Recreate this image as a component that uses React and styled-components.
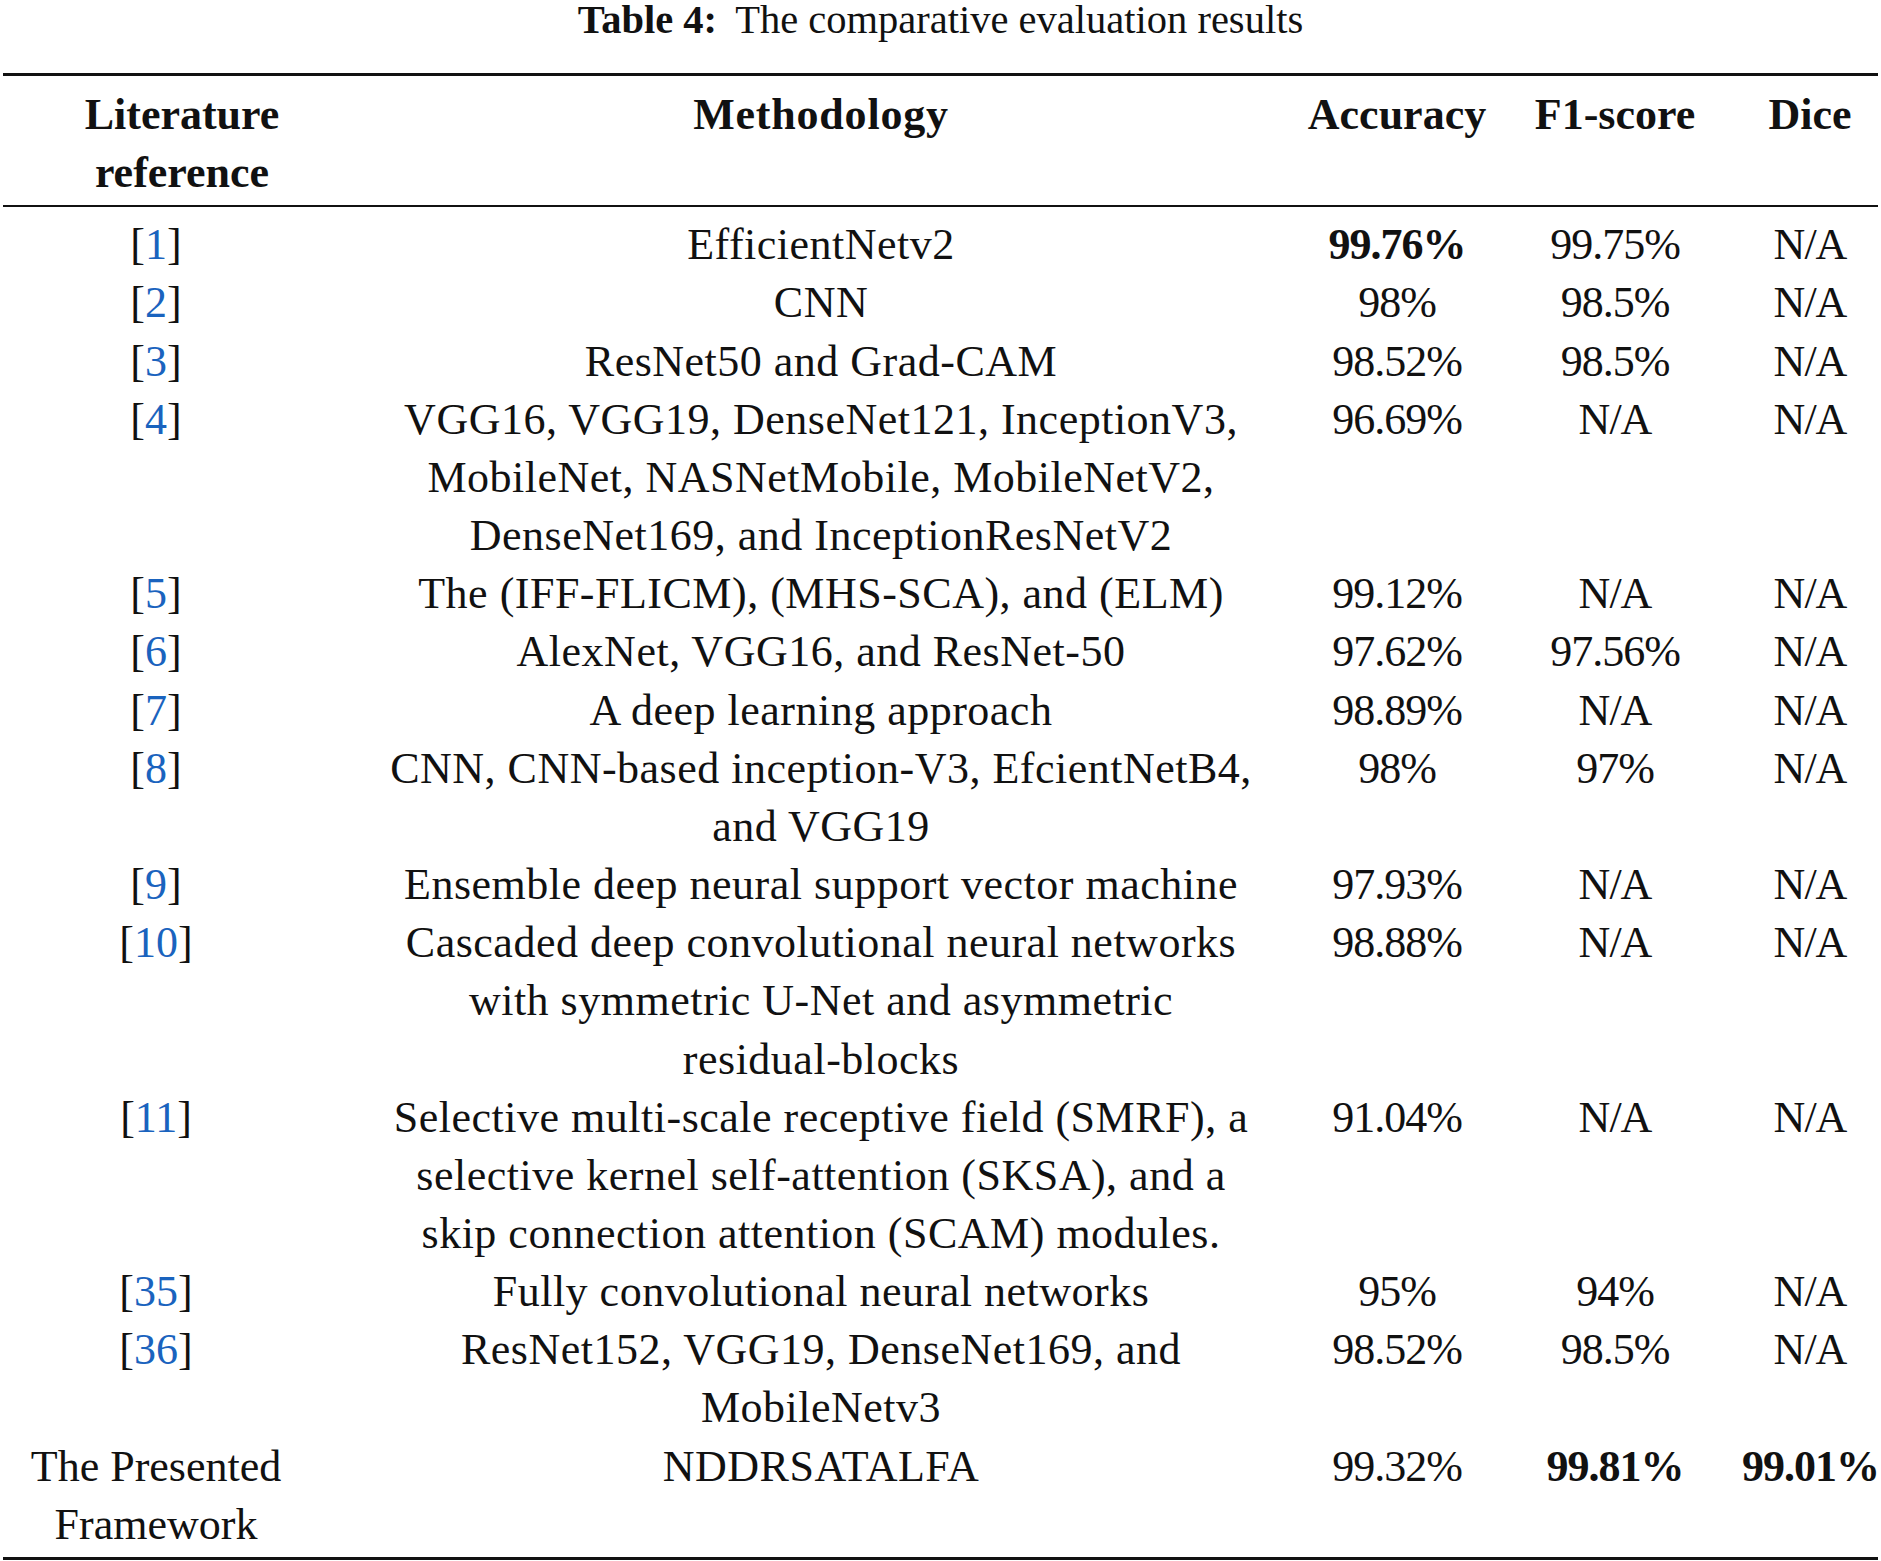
import React from 'react';
import styled, { createGlobalStyle } from 'styled-components';

const GlobalStyle = createGlobalStyle`
  html, body {
    margin: 0;
    padding: 0;
    background: #ffffff;
  }
  body {
    font-family: "Liberation Serif", "Times New Roman", serif;
    color: #111111;
  }
`;

const Page = styled.div`
  width: 1881px;
  padding: 0 3px 0 3px;
  box-sizing: border-box;
`;

const Caption = styled.div`
  font-size: 40.5px;
  line-height: 40px;
  text-align: center;
  margin-bottom: 33px;

  b {
    font-weight: 700;
    margin-right: 0.45em;
  }
`;

const Table = styled.table`
  width: 1875px;
  table-layout: fixed;
  border-collapse: collapse;
  border-top: 3px solid #111;
  border-bottom: 3px solid #111;
  font-size: 44px;
  line-height: 58.15px;
`;

const HeadRow = styled.tr`
  border-bottom: 2px solid #111;
`;

const HeadCell = styled.th`
  font-weight: 700;
  text-align: center;
  vertical-align: top;
  white-space: nowrap;
  padding: 10px 0 3px ${props => props.$shift || 0}px;
  letter-spacing: ${props => props.$spread || 0}px;
`;

const Cell = styled.td`
  text-align: center;
  vertical-align: top;
  white-space: nowrap;
  padding: ${props => (props.$first ? '9px' : '0')} ${props => props.$pullLeft || 0}px
    ${props => (props.$last ? '3px' : '0')} 0;
  font-weight: ${props => (props.$bold ? 700 : 400)};
  letter-spacing: ${props => props.$spacing || 0}px;
`;

const RefLink = styled.a`
  color: #1a63be;
  text-decoration: none;
`;

const Bracket = styled.span`
  color: #111;
`;

const rows = [
  { ref: '1', method: ['EfficientNetv2'], acc: '99.76%', accBold: true, f1: '99.75%', dice: 'N/A' },
  { ref: '2', method: ['CNN'], acc: '98%', f1: '98.5%', dice: 'N/A' },
  { ref: '3', method: ['ResNet50 and Grad-CAM'], acc: '98.52%', f1: '98.5%', dice: 'N/A' },
  {
    ref: '4',
    method: [
      'VGG16, VGG19, DenseNet121, InceptionV3,',
      'MobileNet, NASNetMobile, MobileNetV2,',
      'DenseNet169, and InceptionResNetV2',
    ],
    acc: '96.69%',
    f1: 'N/A',
    dice: 'N/A',
  },
  { ref: '5', method: ['The (IFF-FLICM), (MHS-SCA), and (ELM)'], acc: '99.12%', f1: 'N/A', dice: 'N/A' },
  { ref: '6', method: ['AlexNet, VGG16, and ResNet-50'], acc: '97.62%', f1: '97.56%', dice: 'N/A' },
  { ref: '7', method: ['A deep learning approach'], acc: '98.89%', f1: 'N/A', dice: 'N/A' },
  {
    ref: '8',
    method: ['CNN, CNN-based inception-V3, EfcientNetB4,', 'and VGG19'],
    acc: '98%',
    f1: '97%',
    dice: 'N/A',
  },
  { ref: '9', method: ['Ensemble deep neural support vector machine'], acc: '97.93%', f1: 'N/A', dice: 'N/A' },
  {
    ref: '10',
    method: [
      'Cascaded deep convolutional neural networks',
      'with symmetric U-Net and asymmetric',
      'residual-blocks',
    ],
    acc: '98.88%',
    f1: 'N/A',
    dice: 'N/A',
  },
  {
    ref: '11',
    method: [
      'Selective multi-scale receptive field (SMRF), a',
      'selective kernel self-attention (SKSA), and a',
      'skip connection attention (SCAM) modules.',
    ],
    acc: '91.04%',
    f1: 'N/A',
    dice: 'N/A',
  },
  { ref: '35', method: ['Fully convolutional neural networks'], acc: '95%', f1: '94%', dice: 'N/A' },
  {
    ref: '36',
    method: ['ResNet152, VGG19, DenseNet169, and', 'MobileNetv3'],
    acc: '98.52%',
    f1: '98.5%',
    dice: 'N/A',
  },
  {
    label: ['The Presented', 'Framework'],
    method: ['NDDRSATALFA'],
    acc: '99.32%',
    f1: '99.81%',
    f1Bold: true,
    dice: '99.01%',
    diceBold: true,
  },
];

const Lines = ({ lines }) =>
  lines.map((line, i) => (
    <React.Fragment key={i}>
      {i > 0 && <br />}
      {line}
    </React.Fragment>
  ));

const App = () => {
  return (
    <Page>
      <GlobalStyle />
      <Caption>
        <b>Table 4:</b>The comparative evaluation results
      </Caption>
      <Table>
        <colgroup>
          <col style={{ width: 333 }} />
          <col style={{ width: 970 }} />
          <col style={{ width: 182 }} />
          <col style={{ width: 254 }} />
          <col style={{ width: 136 }} />
        </colgroup>
        <thead>
          <HeadRow>
            <HeadCell $shift={25}>
              Literature
              <br />
              reference
            </HeadCell>
            <HeadCell $spread={0.8}>Methodology</HeadCell>
            <HeadCell>Accuracy</HeadCell>
            <HeadCell>F1-score</HeadCell>
            <HeadCell>Dice</HeadCell>
          </HeadRow>
        </thead>
        <tbody>
          {rows.map((row, i) => {
            const first = i === 0;
            const last = i === rows.length - 1;
            return (
              <tr key={i}>
                <Cell $first={first} $last={last} $pullLeft={27}>
                  {row.ref ? (
                    <>
                      <Bracket>[</Bracket>
                      <RefLink href={`#ref${row.ref}`}>{row.ref}</RefLink>
                      <Bracket>]</Bracket>
                    </>
                  ) : (
                    <Lines lines={row.label} />
                  )}
                </Cell>
                <Cell $first={first} $last={last} $spacing={0.5}>
                  <Lines lines={row.method} />
                </Cell>
                <Cell $first={first} $last={last} $bold={row.accBold} $spacing={-1}>
                  {row.acc}
                </Cell>
                <Cell $first={first} $last={last} $bold={row.f1Bold} $spacing={-1}>
                  {row.f1}
                </Cell>
                <Cell $first={first} $last={last} $bold={row.diceBold} $spacing={-1}>
                  {row.dice}
                </Cell>
              </tr>
            );
          })}
        </tbody>
      </Table>
    </Page>
  );
};

export default App;
